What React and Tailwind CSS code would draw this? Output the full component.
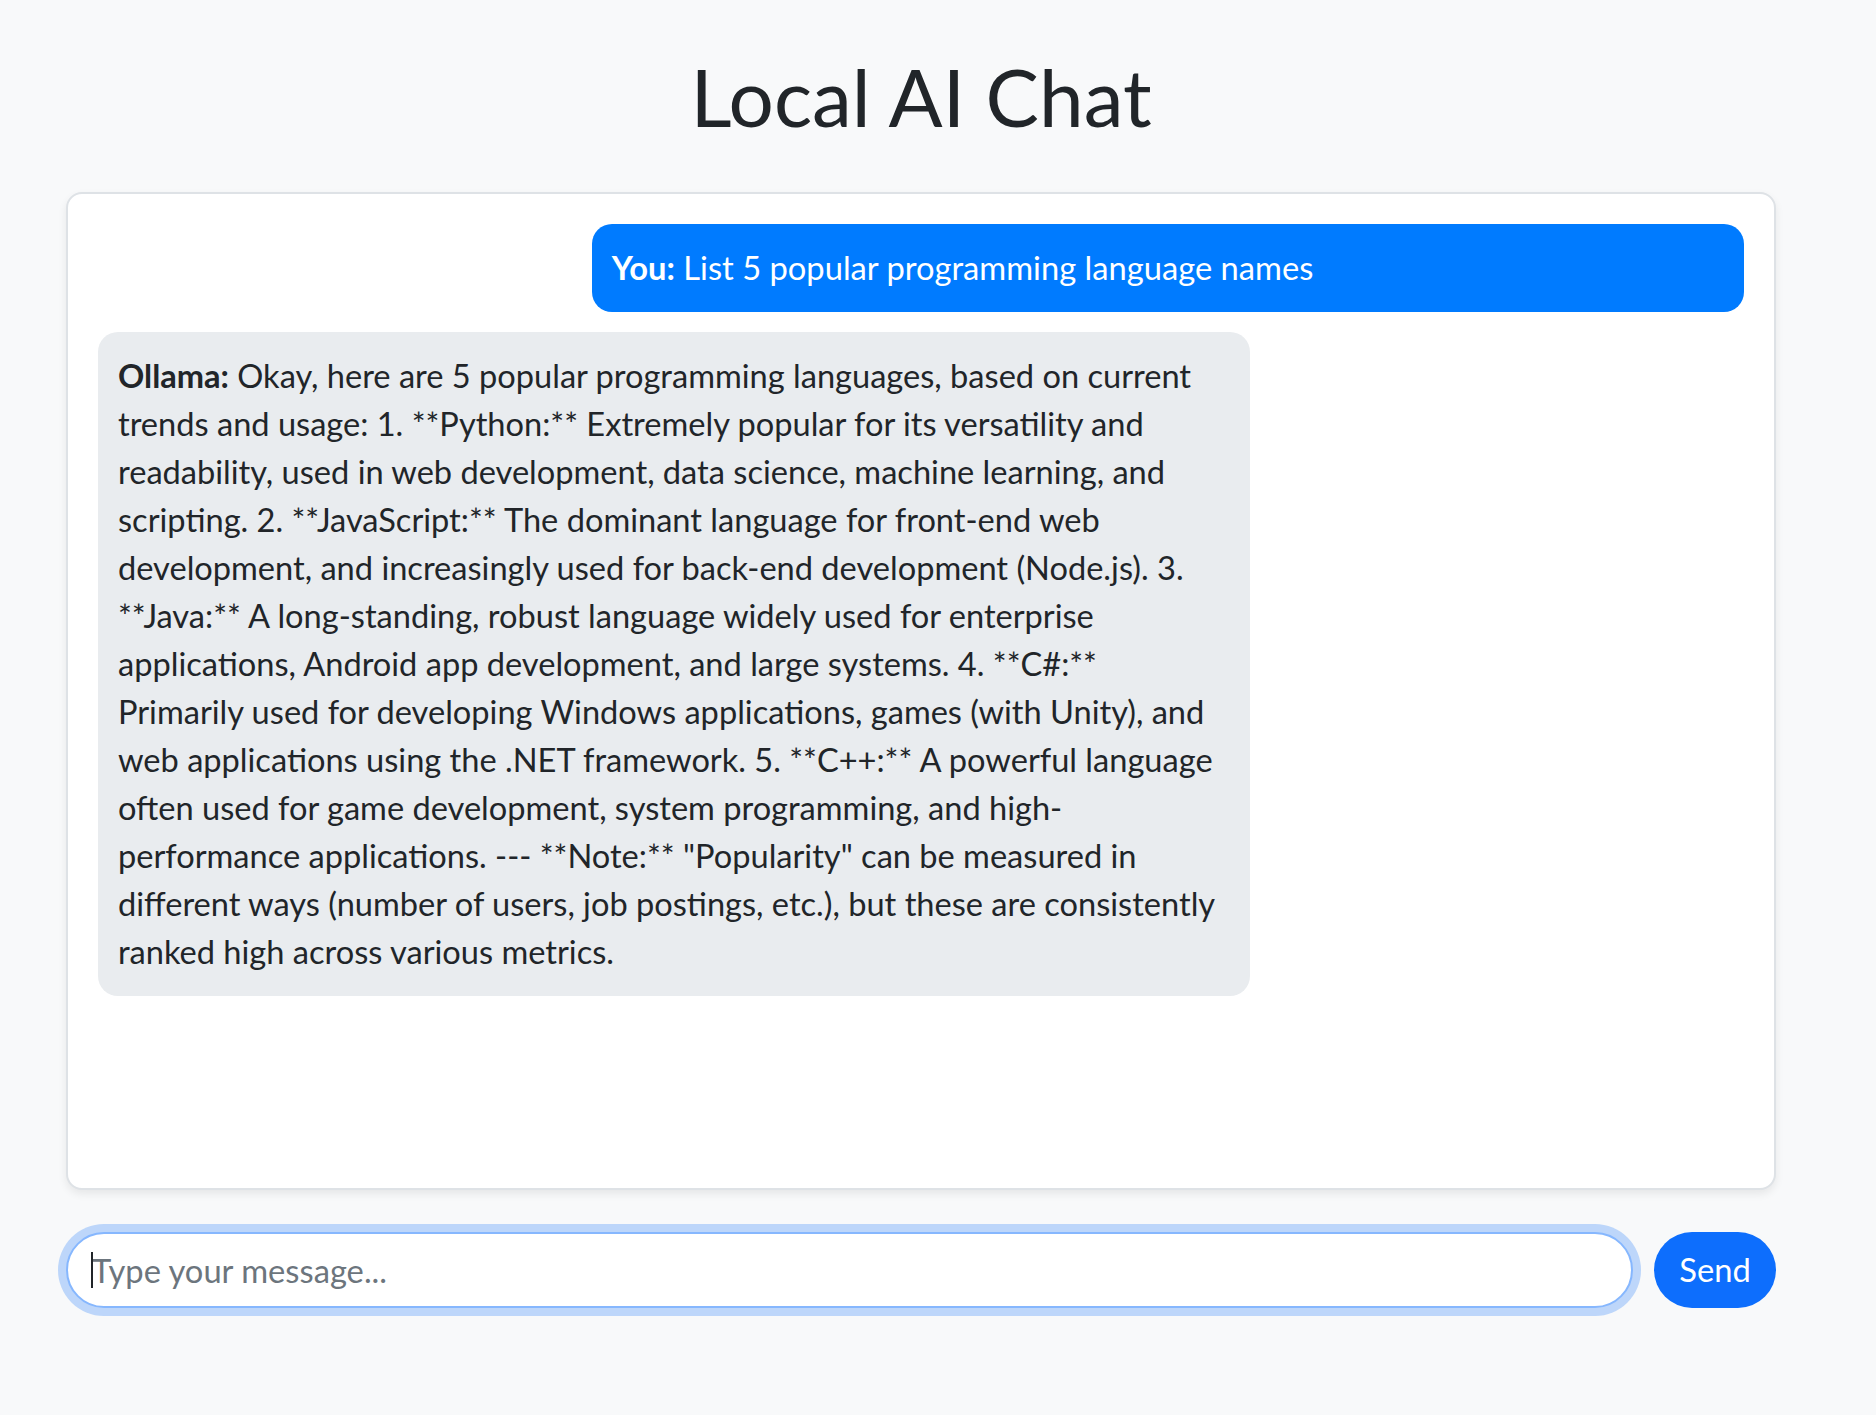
import React from "react";

const lines = [
  null,
  "trends and usage: 1. **Python:** Extremely popular for its versatility and",
  "readability, used in web development, data science, machine learning, and",
  "scripting. 2. **JavaScript:** The dominant language for front-end web",
  "development, and increasingly used for back-end development (Node.js). 3.",
  "**Java:** A long-standing, robust language widely used for enterprise",
  "applications, Android app development, and large systems. 4. **C#:**",
  "Primarily used for developing Windows applications, games (with Unity), and",
  "web applications using the .NET framework. 5. **C++:** A powerful language",
  "often used for game development, system programming, and high-",
  "performance applications. --- **Note:** \"Popularity\" can be measured in",
  "different ways (number of users, job postings, etc.), but these are consistently",
  "ranked high across various metrics.",
];

export default function App() {
  return (
    <div className="min-h-[1415px] bg-[#f8f9fa] [font-family:Lato,sans-serif] text-[#212529]">
      <div className="pl-[66px] pt-[48px]">
        <div className="w-[1710px]">
          <h1 className="text-center text-[80px] leading-[96px] font-normal text-[#212529]">
            Local AI Chat
          </h1>

          <div className="mt-[48px] h-[998px] rounded-[16px] border-2 border-[#dee2e6] bg-white p-[30px] shadow-[0_4px_8px_rgba(0,0,0,0.075)]">
            <div className="ml-auto mb-[20px] w-[70%] rounded-[20px] bg-[#007bff] px-[20px] py-[20px] text-[32.7px] leading-[48px] text-white">
              <b className="font-bold">You:</b> List 5 popular programming language names
            </div>

            <div className="w-[70%] rounded-[20px] bg-[#e9ecef] px-[20px] py-[20px] text-[32.6px] leading-[48px] text-[#212529]">
              {lines.map((l, i) =>
                i === 0 ? (
                  <span key={i} className="block whitespace-nowrap">
                    <b className="font-bold">Ollama:</b> Okay, here are 5 popular programming languages, based on current
                  </span>
                ) : (
                  <span key={i} className="block whitespace-nowrap">
                    {l}
                  </span>
                )
              )}
            </div>
          </div>

          <div className="mt-[42px] flex items-center gap-[21px]">
            <div className="relative">
              <input
                type="text"
                placeholder="Type your message..."
                className="block h-[76px] w-[1567px] rounded-full border-2 border-[#86b7fe] bg-white px-[24px] text-[32.7px] leading-[48px] text-[#212529] outline-none shadow-[0_0_0_8px_rgba(13,110,253,0.25)] placeholder:text-[#6c757d] [font-family:Lato,sans-serif]"
              />
              <span className="pointer-events-none absolute left-[25px] top-[20px] h-[36px] w-[2px] bg-[#212529]" />
            </div>
            <button className="h-[76px] w-[123px] rounded-full bg-[#0d6efd] text-[32.7px] leading-[48px] text-white [font-family:Lato,sans-serif]">
              Send
            </button>
          </div>
        </div>
      </div>
    </div>
  );
}
